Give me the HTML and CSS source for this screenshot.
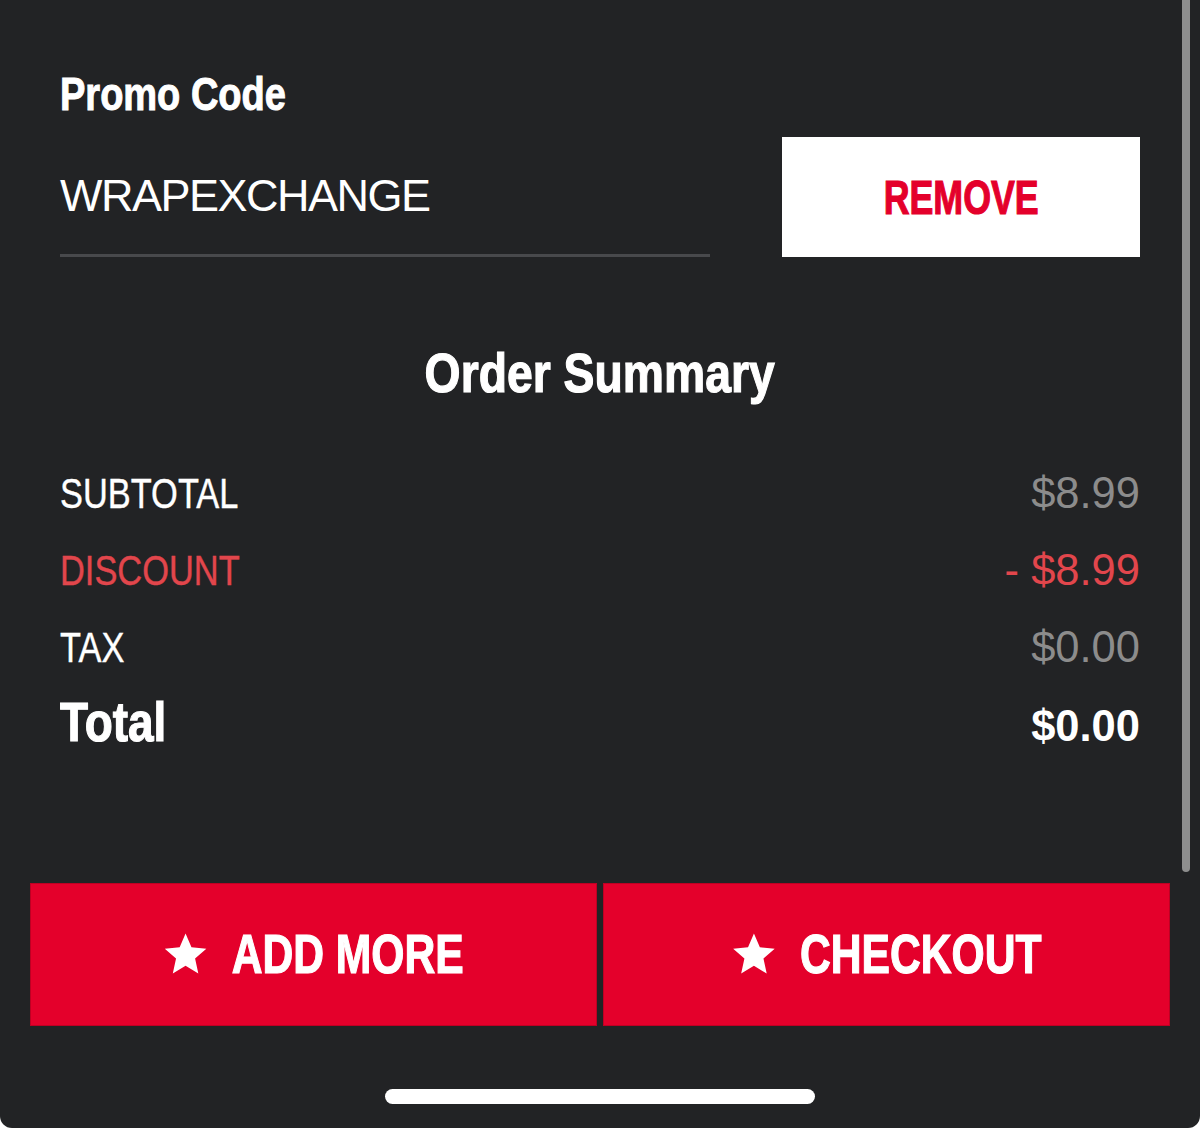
FILE: index.html
```html
<!DOCTYPE html>
<html lang="en">
<head>
<meta charset="utf-8">
<title>Order Summary</title>
<link rel="stylesheet" href="styles.css">
</head>
<body>
<div class="screen">
  <div class="scrollbar"></div>

  <section class="promo">
    <div class="promo-field">
      <h2 class="promo-label"><span class="narrow">Promo Code</span></h2>
      <div class="promo-input">WRAPEXCHANGE</div>
    </div>
    <button class="remove-btn"><span class="narrow">REMOVE</span></button>
  </section>

  <section class="summary">
    <h1 class="summary-title"><span class="narrow">Order Summary</span></h1>
    <div class="rows">
      <div class="row">
        <span class="row-label narrow">SUBTOTAL</span>
        <span class="row-amount">$8.99</span>
      </div>
      <div class="row row-discount">
        <span class="row-label narrow">DISCOUNT</span>
        <span class="row-amount">- $8.99</span>
      </div>
      <div class="row">
        <span class="row-label narrow">TAX</span>
        <span class="row-amount">$0.00</span>
      </div>
      <div class="row row-total">
        <span class="row-label narrow">Total</span>
        <span class="row-amount">$0.00</span>
      </div>
    </div>
  </section>

  <div class="actions">
    <button class="action-btn">
      <span class="btn-content">
        <svg class="star" viewBox="0 0 24 24" preserveAspectRatio="none" aria-hidden="true"><polygon points="12,1.3 15.1,8.5 22.9,9.2 17,14.4 18.7,22.2 12,18.1 5.3,22.2 7,14.4 1.1,9.2 8.9,8.5"/></svg>
        <span>ADD MORE</span>
      </span>
    </button>
    <button class="action-btn">
      <span class="btn-content">
        <svg class="star" viewBox="0 0 24 24" preserveAspectRatio="none" aria-hidden="true"><polygon points="12,1.3 15.1,8.5 22.9,9.2 17,14.4 18.7,22.2 12,18.1 5.3,22.2 7,14.4 1.1,9.2 8.9,8.5"/></svg>
        <span>CHECKOUT</span>
      </span>
    </button>
  </div>

  <div class="home-indicator"></div>
</div>
</body>
</html>
```

FILE: styles.css
```css
* {
  box-sizing: border-box;
}

html, body {
  margin: 0;
  padding: 0;
  background: #ffffff;
}

.screen {
  position: relative;
  width: 1200px;
  height: 1128px;
  background: #222325;
  border-radius: 0 0 12px 12px;
  display: flex;
  flex-direction: column;
  overflow: hidden;
  font-family: "Liberation Sans", Arial, sans-serif;
  color: #ffffff;
}

/* condensed look: Arial metrics squeezed horizontally */
.narrow {
  display: inline-block;
  transform-origin: left center;
  white-space: nowrap;
}

.scrollbar {
  position: absolute;
  top: 0;
  right: 10px;
  width: 8px;
  height: 872px;
  background: #8e8e8e;
  border-radius: 0 0 4px 4px;
}

/* Promo */
.promo {
  display: flex;
  justify-content: space-between;
  align-items: flex-end;
  padding: 71px 60px 0;
}

.promo-field {
  width: 650px;
}

.promo-label {
  margin: 0;
  font-weight: 700;
  font-size: 46px;
  line-height: 46px;
  color: #ffffff;
}

.promo-label .narrow {
  transform: scaleX(0.826);
  -webkit-text-stroke: 1px #ffffff;
}

.promo-input {
  margin-top: 56px;
  padding-bottom: 36px;
  border-bottom: 3px solid #48494c;
  font-size: 45px;
  line-height: 45px;
  letter-spacing: -1.5px;
  color: #ffffff;
}

.remove-btn {
  width: 358px;
  height: 120px;
  border: 0;
  background: #ffffff;
  color: #e4002b;
  font-family: "Liberation Sans", Arial, sans-serif;
  font-weight: 700;
  font-size: 49px;
  line-height: 1;
  padding: 0;
}

.remove-btn .narrow {
  transform: scaleX(0.73);
  transform-origin: center;
  -webkit-text-stroke: 1.2px #e4002b;
}

/* Summary */
.summary {
  padding: 0 60px;
}

.summary-title {
  margin: 88px 0 0;
  text-align: center;
  font-weight: 700;
  font-size: 56px;
  line-height: 56px;
}

.summary-title .narrow {
  transform: scaleX(0.827);
  transform-origin: center;
  -webkit-text-stroke: 1.2px #ffffff;
}

.rows {
  margin-top: 54px;
}

.row {
  display: flex;
  justify-content: space-between;
  align-items: baseline;
  line-height: 77px;
}

.row-label {
  font-size: 43px;
  color: #ffffff;
  transform: scaleX(0.8);
  -webkit-text-stroke: 0.4px currentColor;
}

.row-amount {
  font-size: 43.5px;
  color: #8c8c8c;
}

.row-discount .row-label,
.row-discount .row-amount {
  color: #e2464c;
}

.row-total {
  line-height: 72px;
}

.row-total .row-label {
  font-weight: 700;
  font-size: 56px;
  transform: scaleX(0.82);
  -webkit-text-stroke: 1.2px #ffffff;
}

.row-total .row-amount {
  font-weight: 700;
  color: #ffffff;
}

/* Actions */
.actions {
  margin-top: auto;
  display: flex;
  gap: 6px;
  padding: 0 30px;
}

.action-btn {
  flex: 1;
  height: 143px;
  border: 0;
  padding: 0;
  background: #e4002b;
  box-shadow: inset 0 0 0 1px rgba(120, 0, 20, 0.35);
  color: #ffffff;
  display: flex;
  align-items: center;
  justify-content: center;
  font-family: "Liberation Sans", Arial, sans-serif;
  font-weight: 700;
  font-size: 55px;
  line-height: 1;
}

.btn-content {
  display: inline-flex;
  align-items: center;
  gap: 30px;
  transform: scaleX(0.775);
  -webkit-text-stroke: 1.2px #ffffff;
  white-space: nowrap;
}

.star {
  width: 59px;
  height: 46px;
  fill: #ffffff;
  flex: none;
  margin-top: -2px;
}

.home-indicator {
  width: 430px;
  height: 15px;
  margin: 63px auto 24px;
  background: #ffffff;
  border-radius: 8px;
}
```
